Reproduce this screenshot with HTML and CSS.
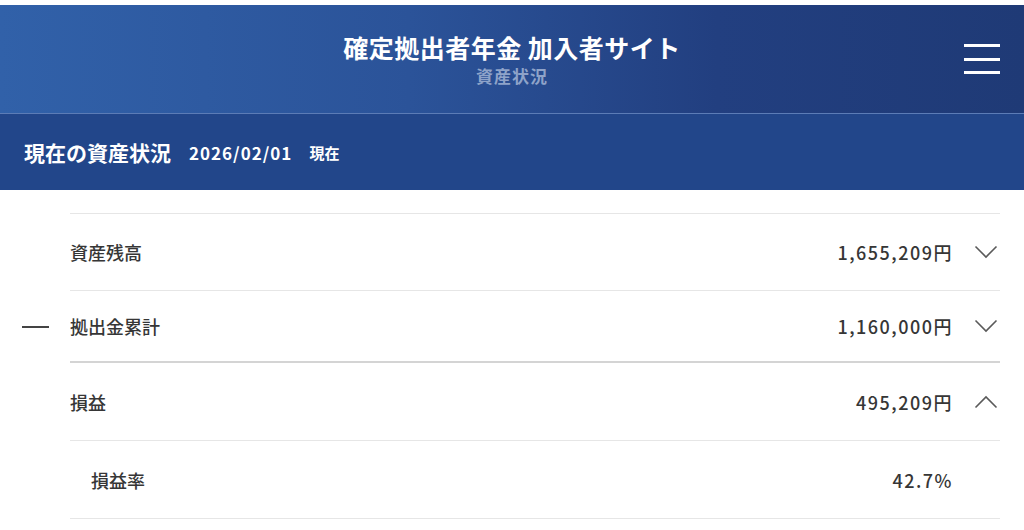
FILE: index.html
```html
<!DOCTYPE html>
<html lang="ja">
<head>
<meta charset="utf-8">
<title>資産状況</title>
<link rel="stylesheet" href="styles.css">
</head>
<body>
<header class="app-header">
  <div class="title-block">
    <h1 class="site-title">確定拠出者年金 加入者サイト</h1>
    <p class="page-name">資産状況</p>
  </div>
  <button class="menu-btn" aria-label="メニュー">
    <span></span><span></span><span></span>
  </button>
</header>
<section class="status-bar">
  <h2 class="status-title">現在の資産状況</h2>
  <span class="status-date">2026/02/01</span>
  <span class="status-now">現在</span>
</section>
<main class="list">
  <div class="row first">
    <div class="gutter"></div>
    <div class="cell"></div>
  </div>
  <div class="row r1">
    <div class="gutter"></div>
    <div class="cell">
      <span class="label">資産残高</span>
      <span class="value">1,655,209円</span>
      <span class="chev"><svg width="24" height="14" viewBox="0 0 24 14"><path d="M1.5 1.5 L12 12 L22.5 1.5" fill="none" stroke="#5a5a5a" stroke-width="1.6"/></svg></span>
    </div>
  </div>
  <div class="row r2">
    <div class="gutter"><span class="dash"></span></div>
    <div class="cell strong">
      <span class="label">拠出金累計</span>
      <span class="value">1,160,000円</span>
      <span class="chev"><svg width="24" height="14" viewBox="0 0 24 14"><path d="M1.5 1.5 L12 12 L22.5 1.5" fill="none" stroke="#5a5a5a" stroke-width="1.6"/></svg></span>
    </div>
  </div>
  <div class="row r3">
    <div class="gutter"></div>
    <div class="cell">
      <span class="label">損益</span>
      <span class="value">495,209円</span>
      <span class="chev"><svg width="24" height="14" viewBox="0 0 24 14"><path d="M1.5 12.5 L12 2 L22.5 12.5" fill="none" stroke="#5a5a5a" stroke-width="1.6"/></svg></span>
    </div>
  </div>
  <div class="row r4">
    <div class="gutter"></div>
    <div class="cell">
      <span class="label sub">損益率</span>
      <span class="value">42.7%</span>
      <span class="chev"></span>
    </div>
  </div>
</main>
</body>
</html>
```
FILE: styles.css
```css
* { box-sizing: border-box; }
html, body { margin: 0; padding: 0; background: #fff; }
body {
  padding-top: 5px;
  font-family: "Noto Sans CJK JP", "Noto Sans", sans-serif;
  color: #333;
  overflow: hidden;
}
.app-header {
  height: 109px;
  background: linear-gradient(90deg, #3161a9 0%, #2b5399 40%, #223f80 70%, #1f3a76 100%);
  border-bottom: 1px solid #5c7cb6;
  display: flex;
  align-items: flex-start;
  justify-content: center;
  padding-top: 27px;
  position: relative;
}
.title-block {
  text-align: center;
}
.site-title {
  margin: 0;
  font-size: 25px;
  font-weight: 700;
  color: #fff;
  line-height: 30px;
  letter-spacing: 0.5px;
}
.page-name {
  margin: 4px 0 0;
  font-size: 17px;
  font-weight: 700;
  color: #8ea3c9;
  line-height: 20px;
  letter-spacing: 1px;
}
.menu-btn {
  position: absolute;
  right: 24px;
  top: 39px;
  width: 36px;
  height: 30px;
  padding: 0;
  border: 0;
  background: none;
  display: flex;
  flex-direction: column;
  justify-content: space-between;
}
.menu-btn span {
  display: block;
  height: 3px;
  width: 36px;
  background: #fff;
}
.status-bar {
  height: 76px;
  background: #22468a;
  display: flex;
  align-items: center;
  padding-left: 24px;
  color: #fff;
  font-weight: 700;
}
.status-title {
  margin: 0;
  font-size: 21px;
  font-weight: 700;
  margin-right: 18px;
}
.status-date {
  font-size: 17px;
  margin-right: 17px;
  letter-spacing: 1px;
}
.status-now {
  font-size: 15px;
}
.list {
  padding-right: 24px;
}
.row {
  display: flex;
}
.gutter {
  width: 70px;
  flex: none;
  display: flex;
  align-items: center;
  padding-left: 22px;
}
.dash {
  display: block;
  width: 27px;
  height: 2px;
  background: #444;
}
.cell {
  flex: 1;
  display: flex;
  align-items: center;
  border-bottom: 1px solid #e6e6e6;
}
.cell.strong { border-bottom: 2px solid #d4d4d4; }
.first .cell { height: 24px; }
.r1 .cell { height: 77px; }
.r2 .cell { height: 72px; }
.r3 .cell { height: 78px; }
.r4 .cell { height: 78px; }
.label {
  font-size: 18px;
  font-weight: 500;
  color: #363636;
  flex: 1;
}
.label.sub { padding-left: 21px; }
.value {
  font-size: 18px;
  font-weight: 500;
  color: #363636;
  letter-spacing: 1.5px;
}
.chev {
  width: 47px;
  flex: none;
  display: flex;
  justify-content: flex-end;
  padding-right: 2px;
}
.chev svg { display: block; }
```
